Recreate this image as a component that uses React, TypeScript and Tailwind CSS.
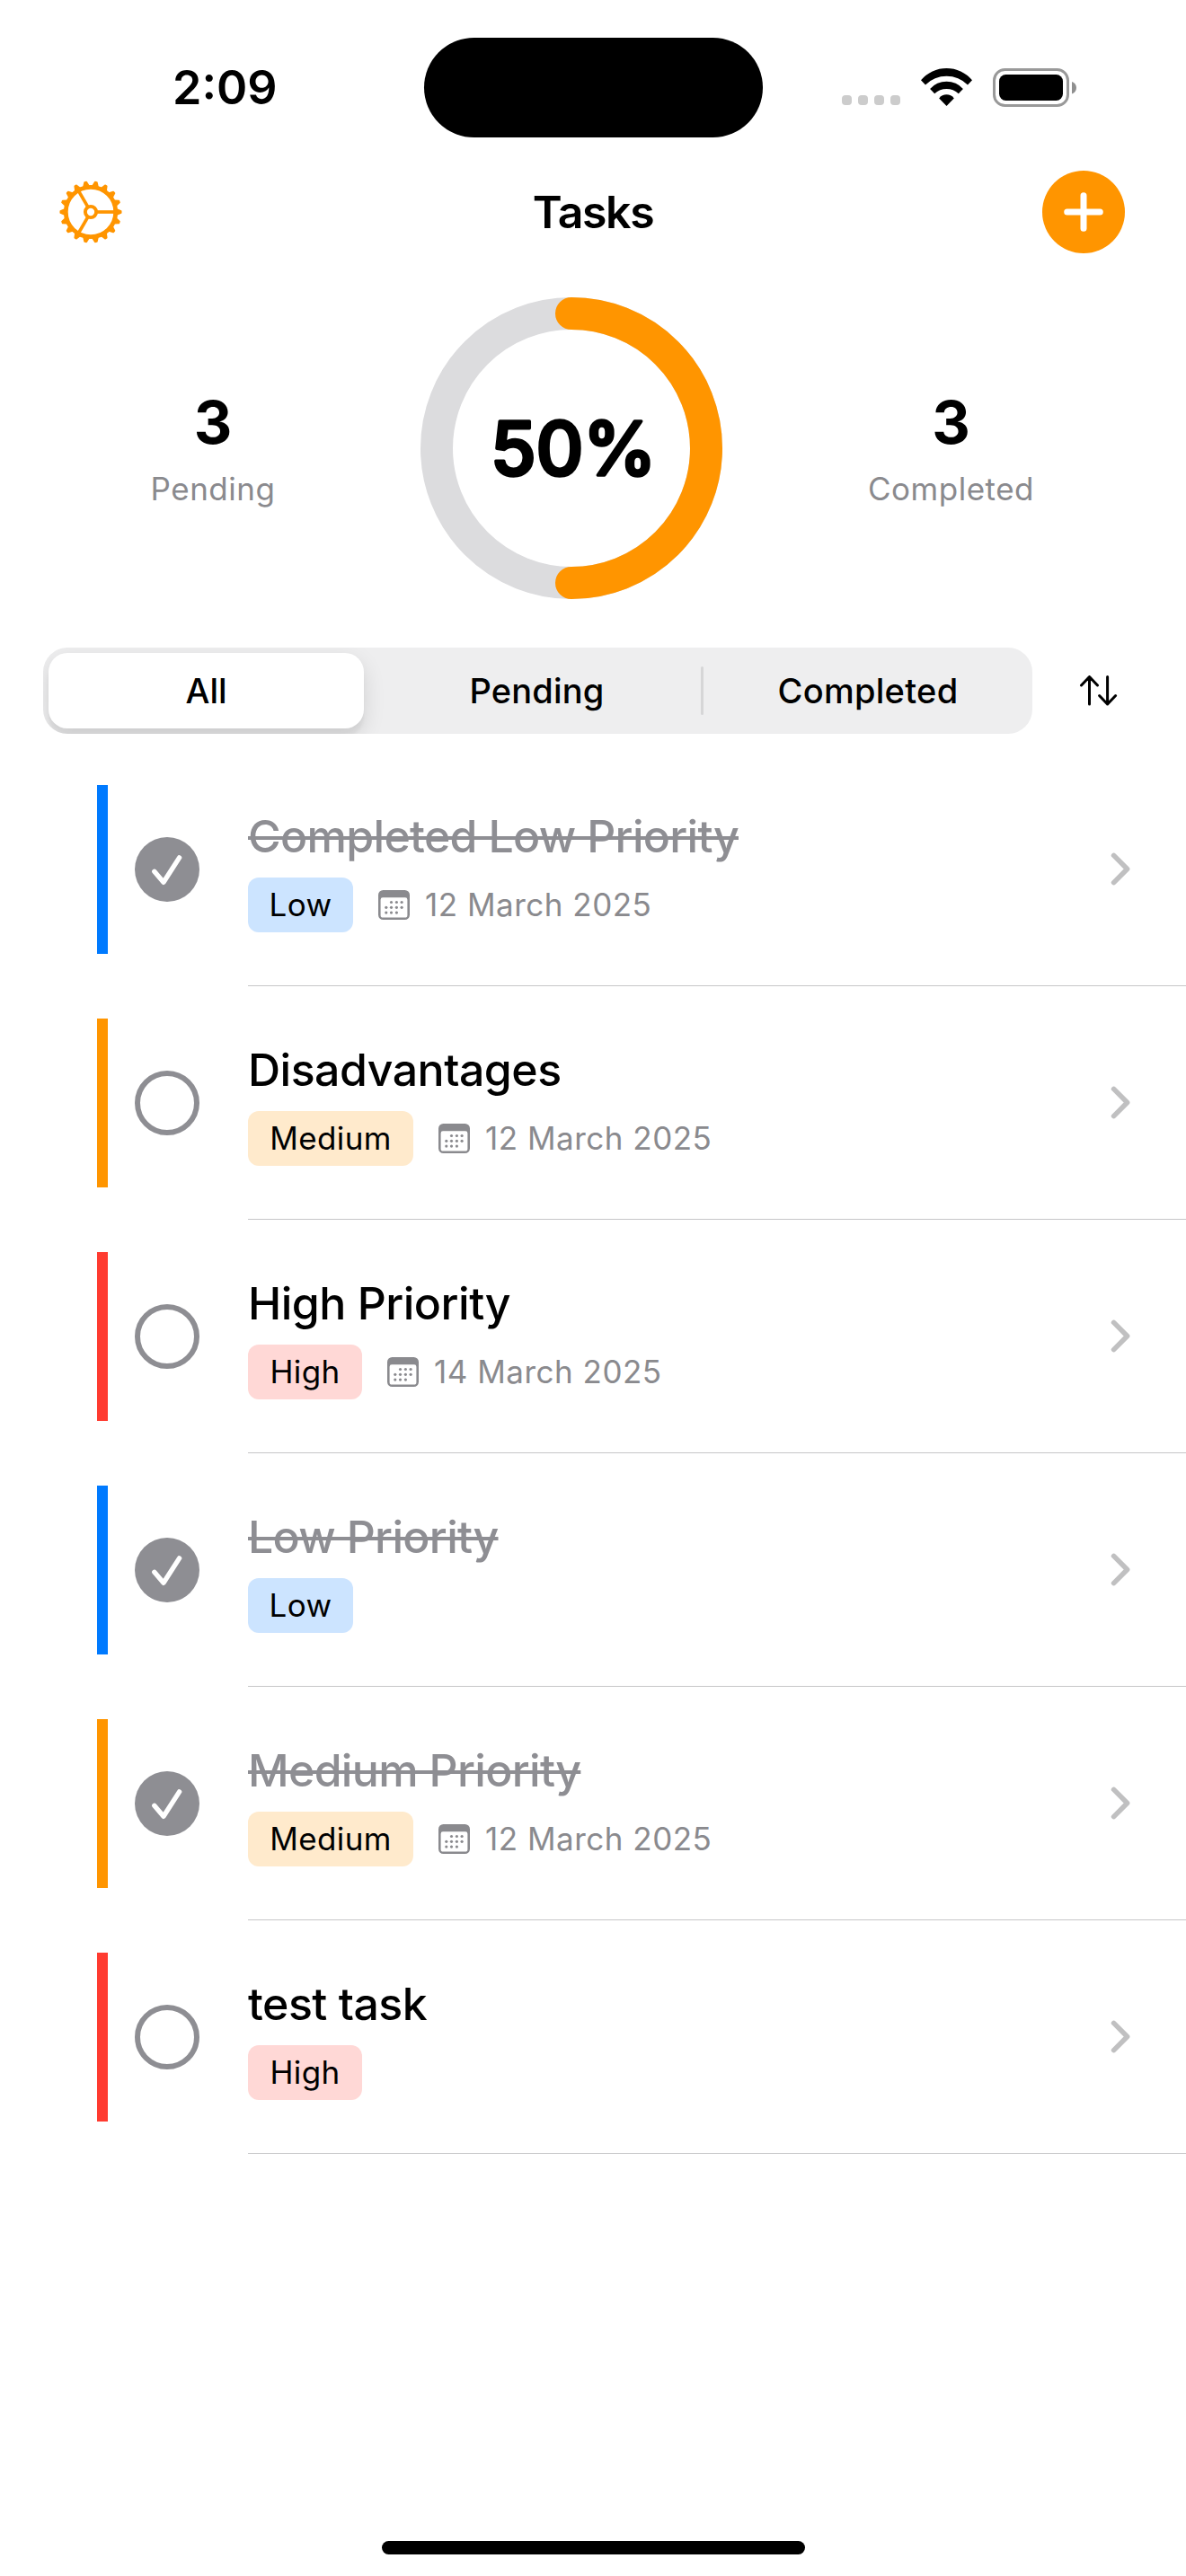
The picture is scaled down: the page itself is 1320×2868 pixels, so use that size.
import React from "react";

type Priority = "Low" | "Medium" | "High";

interface Task {
  title: string;
  priority: Priority;
  done: boolean;
  date?: string;
}

const TASKS: Task[] = [
  { title: "Completed Low Priority", priority: "Low", done: true, date: "12 March 2025" },
  { title: "Disadvantages", priority: "Medium", done: false, date: "12 March 2025" },
  { title: "High Priority", priority: "High", done: false, date: "14 March 2025" },
  { title: "Low Priority", priority: "Low", done: true },
  { title: "Medium Priority", priority: "Medium", done: true, date: "12 March 2025" },
  { title: "test task", priority: "High", done: false },
];

const BAR: Record<Priority, string> = {
  Low: "bg-[#007aff]",
  Medium: "bg-[#ff9500]",
  High: "bg-[#ff3b30]",
};

const BADGE: Record<Priority, string> = {
  Low: "w-[117px] bg-[#cce4ff]",
  Medium: "w-[184px] bg-[#ffeacc]",
  High: "w-[127px] bg-[#ffd8d6]",
};

function WifiIcon() {
  return (
    <svg width="57" height="42" viewBox="0 0 57 42" fill="#000">
      <path d="M0 13.3A37.2 37.2 0 0 1 57 13.3L52 18.4A33.6 33.6 0 0 0 5 18.4Z" />
      <path d="M10.1 23A24.5 24.5 0 0 1 46.9 23L41.8 28.3A19.3 19.3 0 0 0 15.2 28.3Z" />
      <path d="M20.2 33.4A10.3 10.3 0 0 1 36.8 33.4L28.5 42Z" />
    </svg>
  );
}

function BatteryIcon() {
  return (
    <svg width="94" height="43" viewBox="0 0 94 43">
      <rect x="1.5" y="1.5" width="82" height="40" rx="12" fill="none" stroke="#999" strokeWidth="3" />
      <rect x="7" y="7" width="71" height="29" rx="7.5" fill="#000" />
      <path d="M88 15V28.5C91 27.6 93 25 93 21.8S91 16 88 15Z" fill="#8f8f8f" />
    </svg>
  );
}

function GearIcon() {
  const teeth = Array.from({ length: 18 }, (_, i) => i * 20);
  return (
    <svg width="72" height="72" viewBox="-36 -36 72 72" fill="none" stroke="#ff9500">
      <circle r="27.7" strokeWidth="4.8" />
      <circle r="6.1" strokeWidth="3.9" />
      {[0, 120, 240].map((a) => (
        <path key={a} d="M7 0H27" strokeWidth="3.7" transform={`rotate(${a})`} />
      ))}
      {teeth.map((a) => (
        <path
          key={a}
          d="M29 -2.9L33.6 -1V1L29 2.9Z"
          fill="#ff9500"
          strokeWidth="1.8"
          strokeLinejoin="round"
          transform={`rotate(${a})`}
        />
      ))}
    </svg>
  );
}

function CalendarIcon() {
  const dots: [number, number][] = [
    [14.5, 13.5], [20.4, 13.5], [26.1, 13.5],
    [8.8, 19.3], [14.5, 19.3], [20.4, 19.3], [26.1, 19.3],
    [8.8, 25.1], [14.5, 25.1], [20.4, 25.1],
  ];
  return (
    <svg width="35" height="33" viewBox="0 0 35 33" fill="#8a8a8e">
      <path
        fillRule="evenodd"
        d="M5.5 0H29.5A5.5 5.5 0 0 1 35 5.5V27.5A5.5 5.5 0 0 1 29.5 33H5.5A5.5 5.5 0 0 1 0 27.5V5.5A5.5 5.5 0 0 1 5.5 0ZM5 8.3A2.4 2.4 0 0 0 2.6 10.7V27.9A2.6 2.6 0 0 0 5.2 30.5H29.8A2.6 2.6 0 0 0 32.4 27.9V10.7A2.4 2.4 0 0 0 30 8.3Z"
      />
      {dots.map(([x, y]) => (
        <circle key={`${x}-${y}`} cx={x} cy={y} r="1.6" />
      ))}
    </svg>
  );
}

function StatusCircle({ done }: { done: boolean }) {
  return (
    <svg className="ml-[30px] shrink-0" width="72" height="72" viewBox="0 0 72 72" fill="none">
      {done ? (
        <>
          <circle cx="36" cy="36" r="36" fill="#8e8e93" />
          <path
            d="M21.8 38.3L32 50.3L49.6 22.9"
            stroke="#fff"
            strokeWidth="5.4"
            strokeLinecap="round"
            strokeLinejoin="round"
          />
        </>
      ) : (
        <circle cx="36" cy="36" r="33" stroke="#8e8e93" strokeWidth="6" />
      )}
    </svg>
  );
}

function StatusBar() {
  return (
    <div className="flex h-[194px] items-center">
      <div className="w-[472px] pt-[2px] pl-[192px] text-[52px] leading-none font-semibold">2:09</div>
      <div className="h-[111px] w-[377px] rounded-full bg-black" />
      <div className="flex items-center pl-[88px]">
        <div className="mt-[29px] flex gap-[6.6px]">
          {[0, 1, 2, 3].map((i) => (
            <span key={i} className="h-[11px] w-[11.4px] rounded-[4px] bg-[#ccc]" />
          ))}
        </div>
        <div className="ml-[23px] flex items-center gap-[23px]">
          <WifiIcon />
          <BatteryIcon />
        </div>
      </div>
    </div>
  );
}

function NavBar() {
  return (
    <header className="grid h-[83px] grid-cols-[200px_1fr_200px] grid-rows-[83px] items-center">
      <button className="w-fit pl-[65px]" aria-label="Settings">
        <GearIcon />
      </button>
      <h1 className="text-center text-[50px] leading-none font-semibold tracking-[-1.37px]">Tasks</h1>
      <button
        className="mr-[68px] flex size-[92px] items-center justify-center justify-self-end rounded-full bg-[#ff9500]"
        aria-label="Add task"
      >
        <svg width="46" height="46" viewBox="-23 -23 46 46" stroke="#fff" strokeWidth="7" strokeLinecap="round">
          <path d="M-18.3 0H18.3M0 -18.3V18.3" />
        </svg>
      </button>
    </header>
  );
}

function Stat({ value, label, className }: { value: number; label: string; className: string }) {
  return (
    <div className={`flex flex-col items-center gap-[15px] ${className}`}>
      <div className="text-[66px] leading-[76px] font-bold">{value}</div>
      <div className="text-[35px] leading-[43px] tracking-[0.5px] text-[#8a8a8e]">{label}</div>
    </div>
  );
}

function Summary() {
  return (
    <section className="flex items-center pt-[54px]">
      <Stat value={3} label="Pending" className="w-[468px] pl-[6px]" />
      <svg width="336" height="336" viewBox="0 0 336 336" fill="none">
        <circle cx="168" cy="168" r="150" stroke="#dcdcde" strokeWidth="36" />
        <path d="M168 18A150 150 0 0 1 168 318" stroke="#ff9500" strokeWidth="36" strokeLinecap="round" />
        <text
          x="78"
          y="197.5"
          className="text-[82px] font-medium tracking-[-0.3px]"
          fill="#000"
          stroke="#000"
          strokeWidth="3.6"
          strokeLinejoin="round"
        >
          50%
        </text>
      </svg>
      <Stat value={3} label="Completed" className="flex-1 pr-[7px]" />
    </section>
  );
}

function Filters() {
  return (
    <div className="mt-[54px] flex items-center">
      <div className="ml-12 flex h-24 w-[1101px] items-center overflow-hidden rounded-[27px] bg-[#eeeeef] text-[38px]">
        <button className="ml-[6px] h-[84px] w-[351px] rounded-[21px] bg-white font-[550] shadow-[0_9px_24px_rgba(0,0,0,0.12),0_9px_3px_rgba(0,0,0,0.04)]">
          All
        </button>
        <button className="ml-[10px] w-[365px] font-[460] tracking-[0.2px]">Pending</button>
        <span className="h-[54px] w-[3px] rounded-full bg-[#d6d6d7]" />
        <button className="flex-1 font-[460] tracking-[0.3px]">Completed</button>
      </div>
      <button className="ml-[51px]" aria-label="Sort">
        <svg
          width="46"
          height="36"
          viewBox="0 0 46 36"
          fill="none"
          stroke="#000"
          strokeWidth="3"
          strokeLinecap="round"
          strokeLinejoin="round"
        >
          <path d="M12.5 33V2.5M3.5 12L12.5 2.5L21.5 12" />
          <path d="M32.6 2.5V33M23.6 23.5L32.6 33L41.6 23.5" />
        </svg>
      </button>
    </div>
  );
}

function TaskRow({ task }: { task: Task }) {
  return (
    <li className="flex h-[260px] items-center pl-[108px]">
      <span className={`h-[188px] w-3 shrink-0 ${BAR[task.priority]}`} />
      <StatusCircle done={task.done} />
      <div className="ml-[54px] flex h-full flex-1 items-center border-b border-[#c6c6c8] pt-1">
        <div className="flex flex-1 flex-col items-start gap-4">
          <div
            className={
              task.done
                ? "text-[50px] leading-[60px] font-medium tracking-[-0.68px] text-[#8e8e93] line-through decoration-4"
                : "text-[50px] leading-[60px] font-medium tracking-[-0.5px]"
            }
          >
            {task.title}
          </div>
          <div className="flex items-center text-[35px]">
            <span
              className={`flex h-[61px] items-center justify-center rounded-xl tracking-[0.4px] ${BADGE[task.priority]}`}
            >
              {task.priority}
            </span>
            {task.date && (
              <span className="ml-7 flex items-center gap-[17px] tracking-[0.5px] text-[#8a8a8e]">
                <CalendarIcon />
                {task.date}
              </span>
            )}
          </div>
        </div>
        <svg
          className="-mt-[5px] mr-[61px]"
          width="23"
          height="37"
          viewBox="0 0 23 37"
          fill="none"
          stroke="#c0c0c1"
          strokeWidth="5.6"
          strokeLinecap="round"
          strokeLinejoin="round"
        >
          <path d="M3.6 3.4L18.6 18.5L3.6 33.6" />
        </svg>
      </div>
    </li>
  );
}

export default function App() {
  return (
    <div className="flex h-[2868px] w-[1320px] flex-col bg-white font-['Inter',sans-serif] text-black">
      <StatusBar />
      <NavBar />
      <Summary />
      <Filters />
      <ul className="mt-[21px]">
        {TASKS.map((task) => (
          <TaskRow key={task.title} task={task} />
        ))}
      </ul>
      <div className="mt-auto mb-6 ml-px h-[15px] w-[471px] self-center rounded-full bg-black" />
    </div>
  );
}
